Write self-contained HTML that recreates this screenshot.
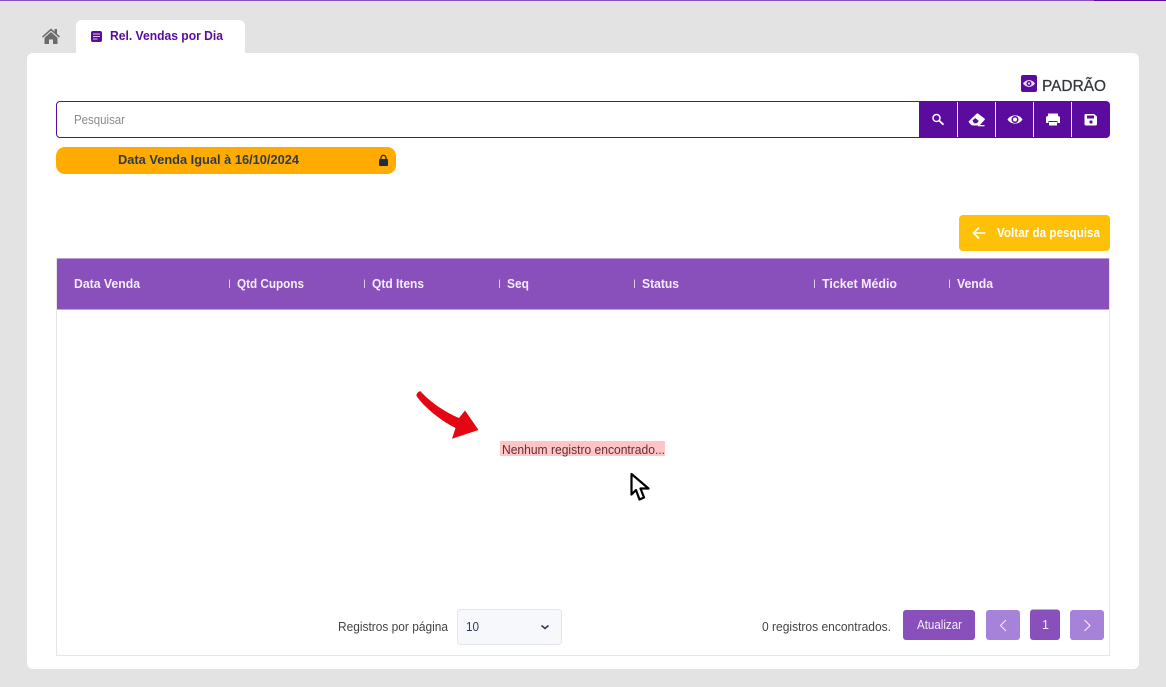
<!DOCTYPE html>
<html lang="pt-BR"><head><meta charset="utf-8"><title>Rel. Vendas por Dia</title>
<style>
html,body{margin:0;padding:0;width:1166px;height:687px;overflow:hidden;background:#e3e3e3}
svg{display:block;position:absolute;left:0;top:0}
text{font-family:"Liberation Sans",sans-serif}
</style></head><body>
<svg width="1166" height="687" viewBox="0 0 1166 687" xmlns="http://www.w3.org/2000/svg">
<rect x="0" y="0" width="1094" height="1" fill="#8a4fbd"/>
<rect x="1094" y="0" width="72" height="1" fill="#5b0b9d"/>
<rect x="27" y="53" width="1112" height="616" rx="6" fill="#fff"/>
<path d="M76 54V26a6 6 0 0 1 6-6H239a6 6 0 0 1 6 6V54Z" fill="#fff"/>
<path d="M42 36.500L51 28.500L54.500 31.600V29H57V33.800L60 36.500L59 37.600L51 30.600L43 37.600Z M44.500 37.800L51 32L57.500 37.800V44H53V39.500H49V44H44.500Z" fill="#6b6b6b"/>
<rect x="91" y="31" width="11" height="11" rx="2" fill="#5b0b9d"/>
<path d="M93 34h7M93 36.500h7M93 39h4.500" stroke="#d9c6ea" stroke-width="1"/>
<text x="110" y="40" font-size="13" font-weight="700" fill="#5b0b9d" textLength="113" lengthAdjust="spacingAndGlyphs">Rel. Vendas por Dia</text>
<rect x="1021" y="75" width="16" height="17" rx="2" fill="#5b0b9d"/>
<path d="M1023 83.500C1026 79 1032 79 1035 83.500C1032 88 1026 88 1023 83.500Z" fill="#e9ddf3"/>
<circle cx="1029" cy="83.500" r="2.500" fill="#5b0b9d"/><circle cx="1029" cy="83.500" r="1.100" fill="#e9ddf3"/>
<text x="1042" y="91" font-size="16" fill="#33363a" stroke="#33363a" stroke-width="0.250" textLength="64" lengthAdjust="spacingAndGlyphs">PADRÃO</text>
<rect x="56.500" y="101.500" width="866" height="36" rx="3.500" fill="#fff" stroke="#5b0b9d" stroke-width="1"/>
<text x="74" y="124" font-size="13" fill="#8b8b8b" textLength="51" lengthAdjust="spacingAndGlyphs">Pesquisar</text>
<path d="M919 101H1106a4 4 0 0 1 4 4V134a4 4 0 0 1-4 4H919Z" fill="#5b0b9d"/>
<path d="M957.500 102V137M995.500 102V137M1033.500 102V137M1071.500 102V137" stroke="#f2ecf7" stroke-width="1"/>
<circle cx="936.500" cy="118" r="3.500" fill="none" stroke="#fff" stroke-width="1.500"/>
<path d="M939.200 120.700L943.500 124.700" stroke="#fff" stroke-width="1.800"/>
<path d="M968.500 121.500L976.500 113.800C977 113.300 977.800 113.300 978.300 113.800L984.500 118.500C985 119 985 119.500 984.500 120L979.500 125.500H973C971.500 125.500 969.500 123.500 968.500 121.500Z" fill="#fff"/>
<path d="M972.500 120.500L975.300 118L978.800 121L976.800 123.300H974Z" fill="#5b0b9d"/>
<rect x="978" y="125" width="6.500" height="1.300" fill="#fff"/>
<path d="M1007.500 119.500C1011 114 1019 114 1022.500 119.500C1019 125 1011 125 1007.500 119.500Z" fill="#fff"/>
<circle cx="1015" cy="119.500" r="2.800" fill="none" stroke="#5b0b9d" stroke-width="1.500"/>
<path d="M1048 113.500H1058V117H1048Z" fill="#fff"/>
<path d="M1046 117.500C1046 116.500 1047 116 1048 116H1058C1059 116 1060 116.500 1060 117.500V123H1057.500V121H1048.500V123H1046Z" fill="#fff"/>
<rect x="1049" y="122" width="8" height="3.500" fill="#fff"/>
<path d="M1085 114H1094L1097 116.500V124C1097 125 1096.500 125.500 1095.500 125.500H1086C1085 125.500 1084.500 125 1084.500 124V115Z" fill="#fff"/>
<rect x="1087" y="115.500" width="7" height="3" fill="#5b0b9d"/>
<circle cx="1091" cy="122" r="1.600" fill="#5b0b9d"/>
<rect x="56" y="147" width="340" height="27" rx="9" fill="#ffab00"/>
<text x="118" y="164" font-size="12.500" font-weight="700" fill="#2f3a4d" textLength="181" lengthAdjust="spacingAndGlyphs">Data Venda Igual à 16/10/2024</text>
<rect x="379" y="159" width="9" height="7" rx="1" fill="#1f2a44"/>
<path d="M381 159.500V157.800a2.500 2.500 0 0 1 5 0V159.500" fill="none" stroke="#1f2a44" stroke-width="1.300"/>
<rect x="959" y="215" width="151" height="36" rx="4" fill="#ffc107"/>
<path d="M985.500 233H973.500M979 227.500L973.500 233L979 238.500" fill="none" stroke="#fff" stroke-width="1.600"/>
<text x="997" y="237" font-size="12.500" font-weight="700" fill="#fff" textLength="103" lengthAdjust="spacingAndGlyphs">Voltar da pesquisa</text>
<rect x="56.500" y="258.500" width="1053" height="397" fill="#fff" stroke="#e6e6e6" stroke-width="1"/>
<rect x="57" y="258.500" width="1052" height="50.500" fill="#8950bc"/>
<rect x="57" y="309" width="1052" height="1" fill="#c3a6de"/>
<g fill="#f3edf9" font-size="12.500" font-weight="700">
<text x="74" y="288" textLength="66" lengthAdjust="spacingAndGlyphs">Data Venda</text>
<text x="237" y="288" textLength="67" lengthAdjust="spacingAndGlyphs">Qtd Cupons</text>
<text x="372" y="288" textLength="52" lengthAdjust="spacingAndGlyphs">Qtd Itens</text>
<text x="507" y="288" textLength="22" lengthAdjust="spacingAndGlyphs">Seq</text>
<text x="642" y="288" textLength="37" lengthAdjust="spacingAndGlyphs">Status</text>
<text x="822" y="288" textLength="75" lengthAdjust="spacingAndGlyphs">Ticket Médio</text>
<text x="957" y="288" textLength="36" lengthAdjust="spacingAndGlyphs">Venda</text>
</g>
<path d="M229.500 279.500V288M364.500 279.500V288M499.500 279.500V288M634.500 279.500V288M814.500 279.500V288M949.500 279.500V288" stroke="#dccbec" stroke-width="1"/>
<path d="M420.500 391.200C430 402 445 412 459 418L465 410.500L478.500 430L452 438.800L455.500 428C440 420 425 408 416.500 396C416 394 418.500 391 420.500 391.200Z" fill="#e30613"/>
<rect x="500" y="441" width="165" height="15" fill="#ffc4c4"/>
<text x="502" y="454" font-size="12.500" fill="#5f3138" textLength="163" lengthAdjust="spacingAndGlyphs">Nenhum registro encontrado...</text>
<path d="M631.500 474V494.500L636 490L639.500 499.500L644 497.500L640.500 488.500H648.500Z" fill="#fff" stroke="#000" stroke-width="2.200" stroke-linejoin="round"/>
<text x="338" y="631" font-size="12.500" fill="#444" textLength="110" lengthAdjust="spacingAndGlyphs">Registros por página</text>
<rect x="457.500" y="609.500" width="104" height="35" rx="3" fill="#f7f8fb" stroke="#e3e6eb" stroke-width="1"/>
<text x="466" y="631" font-size="12.500" fill="#2d3a55" textLength="13" lengthAdjust="spacingAndGlyphs">10</text>
<path d="M541.500 625.500L545 628.500L548.500 625.500" fill="none" stroke="#2d3a55" stroke-width="1.600"/>
<text x="762" y="631" font-size="12.500" fill="#444" textLength="129" lengthAdjust="spacingAndGlyphs">0 registros encontrados.</text>
<rect x="903" y="610" width="72" height="30" rx="3" fill="#8950bc"/>
<text x="917" y="629" font-size="12.500" fill="#f3edf9" textLength="45" lengthAdjust="spacingAndGlyphs">Atualizar</text>
<rect x="986" y="610" width="34" height="30" rx="3" fill="#a682d8"/>
<path d="M1006 620L1000.500 625.500L1006 631" fill="none" stroke="#f3edf9" stroke-width="1.100"/>
<rect x="1030" y="609.500" width="30" height="30.500" rx="3" fill="#8950bc"/>
<text x="1042" y="629" font-size="12.500" fill="#f3edf9">1</text>
<rect x="1070" y="610" width="34" height="30" rx="3" fill="#a682d8"/>
<path d="M1084.500 620L1090 625.500L1084.500 631" fill="none" stroke="#f3edf9" stroke-width="1.100"/>
</svg>
</body></html>
